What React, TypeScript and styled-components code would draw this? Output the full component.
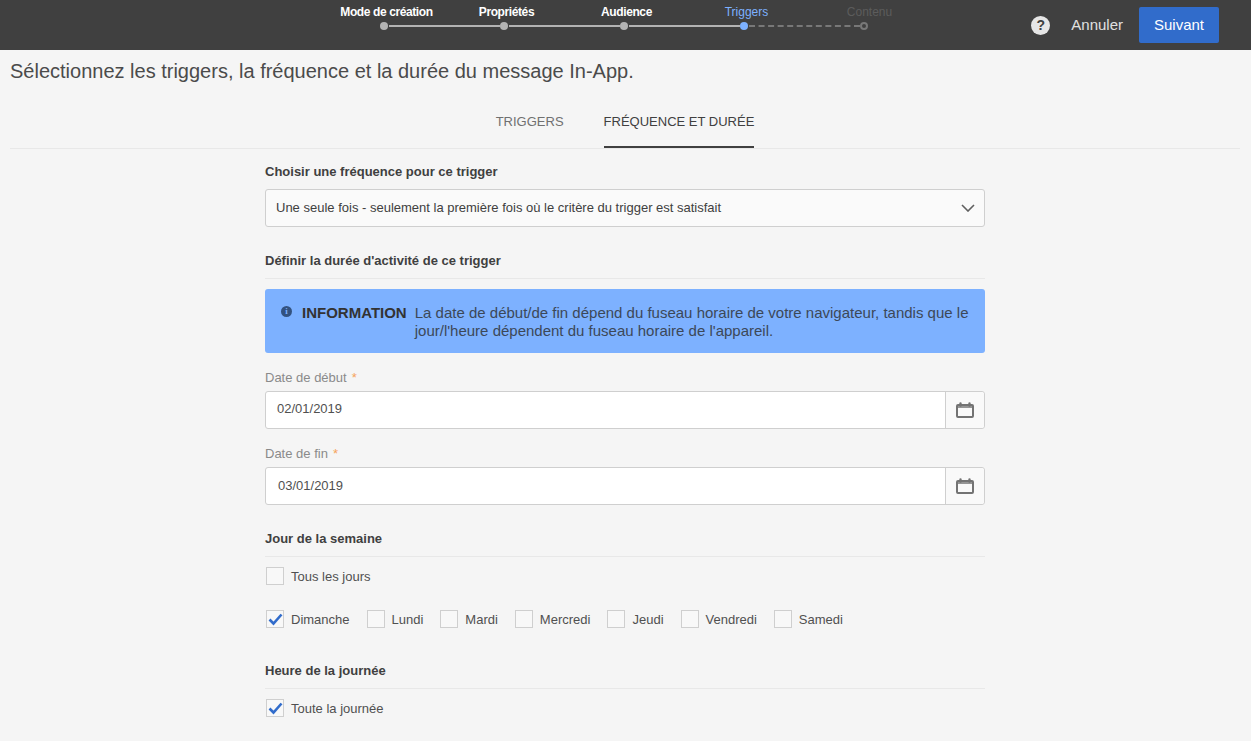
import styled, { createGlobalStyle } from 'styled-components';

const GlobalStyle = createGlobalStyle`
  html, body { margin: 0; padding: 0; background: #f5f5f5; }
  body {
    font-family: "Liberation Sans", Arial, sans-serif;
    color: #404040;
    height: 741px;
    overflow: hidden;
  }
  * { box-sizing: border-box; }
`;

const TopBar = styled.header`
  height: 50px;
  background: #404040;
  position: relative;
  display: flex;
  justify-content: flex-end;
  align-items: center;
  padding: 0 32px 0 0;
`;

const Stepper = styled.ol`
  position: absolute;
  left: 324px;
  top: 0;
  margin: 0;
  padding: 0;
  list-style: none;
  display: flex;
`;

const Step = styled.li<{ $state: 'done' | 'active' | 'todo' }>`
  width: 120px;
  height: 50px;
  position: relative;
  text-align: center;
  padding: 5px 0 0 ${p => (p.$state === 'todo' ? 11 : 5)}px;
  font-size: 12px;
  line-height: 14px;
  white-space: nowrap;
  font-weight: ${p => (p.$state === 'done' ? 'bold' : 'normal')};
  letter-spacing: ${p => (p.$state === 'done' ? '-0.4px' : '0')};
  color: ${p => (p.$state === 'done' ? '#fff' : p.$state === 'active' ? '#7db1ff' : '#5c5c5c')};
`;

const Dot = styled.span<{ $state: 'done' | 'active' | 'todo' }>`
  position: absolute;
  left: 56px;
  top: 22px;
  width: 8px;
  height: 8px;
  border-radius: 50%;
  background: ${p => (p.$state === 'done' ? '#b3b3b3' : p.$state === 'active' ? '#7db1ff' : 'transparent')};
  border: ${p => (p.$state === 'todo' ? '2px solid #787878' : 'none')};
`;

const Link = styled.span<{ $dashed?: boolean }>`
  position: absolute;
  left: 65px;
  top: 25px;
  width: 111px;
  border-top: 2px ${p => (p.$dashed ? 'dashed #787878' : 'solid #b3b3b3')};
`;

const HelpIcon = styled.span`
  width: 19px;
  height: 19px;
  border-radius: 50%;
  background: #e6e6e6;
  color: #404040;
  font-size: 14px;
  font-weight: bold;
  line-height: 19px;
  text-align: center;
  margin-right: 21px;
`;

const CancelLink = styled.span`
  font-size: 15px;
  line-height: 18px;
  color: #e0e0e0;
  margin-right: 16px;
`;

const NextButton = styled.button`
  width: 80px;
  height: 36px;
  border: 0;
  border-radius: 2px;
  background: #316ccb;
  color: #fff;
  font: 15px/18px "Liberation Sans", Arial, sans-serif;
  padding: 0;
`;

const PageTitle = styled.h1`
  margin: 0;
  padding: 9px 0 0 10px;
  height: 44px;
  font-size: 20px;
  line-height: 24px;
  font-weight: normal;
  color: #4b4b4b;
`;

const Tabs = styled.nav`
  margin: 0 11px 0 10px;
  height: 55px;
  border-bottom: 1px solid #e8e8e8;
  display: flex;
  justify-content: center;
  gap: 40px;
`;

const Tab = styled.div<{ $active?: boolean }>`
  height: 54px;
  padding-top: 20px;
  font-size: 13px;
  line-height: 16px;
  color: ${p => (p.$active ? '#404040' : '#707070')};
  border-bottom: ${p => (p.$active ? '2px solid #404040' : 'none')};
`;

const Form = styled.main`
  width: 720px;
  margin-left: 265px;
`;

const SectionLabel = styled.div`
  font-size: 13px;
  line-height: 16px;
  font-weight: bold;
  color: #404040;
`;

const FrequencyLabel = styled(SectionLabel)`
  padding-top: 15px;
  height: 40px;
`;

const SectionHead = styled(SectionLabel)<{ $top: number }>`
  margin-top: ${p => p.$top}px;
  padding-top: 1px;
  height: 27px;
  border-bottom: 1px solid #e8e8e8;
`;

const Select = styled.div`
  height: 38px;
  border: 1px solid #cfcfcf;
  border-radius: 3px;
  background: #fafafa;
  display: flex;
  align-items: center;
  justify-content: space-between;
  padding: 0 9px 0 10px;
  font-size: 13px;
  color: #404040;
`;

const SelectText = styled.span`
  line-height: 16px;
  padding-bottom: 1px;
`;

const InfoBox = styled.section`
  margin-top: 10px;
  height: 64px;
  background: #7db1ff;
  border-radius: 3px;
  padding: 15px 15px 0 16px;
  display: flex;
  font-size: 15px;
  line-height: 18px;
  color: #3c4858;
`;

const InfoGlyph = styled.span`
  width: 11px;
  height: 11px;
  margin-top: 2px;
  margin-right: 10px;
  flex: none;
  border-radius: 50%;
  background: #33527f;
  color: #7db1ff;
  font: bold 9px/11px "Liberation Serif", serif;
  text-align: center;
`;

const InfoTitle = styled.strong`
  margin-right: 8px;
  flex: none;
  color: #333;
`;

const FieldLabel = styled.label<{ $top: number }>`
  display: block;
  margin-top: ${p => p.$top}px;
  height: 22px;
  padding-top: 1px;
  font-size: 13px;
  line-height: 16px;
  color: #8a8a8a;
`;

const Required = styled.span`
  color: #f5a35c;
  margin-left: 5px;
`;

const DateField = styled.div`
  height: 38px;
  border: 1px solid #cfcfcf;
  border-radius: 3px;
  background: #fff;
  display: flex;
`;

const DateValue = styled.div<{ $indent: number; $line: number }>`
  flex: 1;
  padding-left: ${p => p.$indent}px;
  font-size: 13px;
  line-height: ${p => p.$line}px;
  color: #505050;
`;

const CalendarButton = styled.div`
  width: 39px;
  border-left: 1px solid #cfcfcf;
  background: #f9f9f9;
  border-radius: 0 3px 3px 0;
  display: flex;
  align-items: center;
  justify-content: center;
`;

const CheckRow = styled.div<{ $top: number }>`
  display: flex;
  margin-top: ${p => p.$top}px;
  gap: 17px;
  padding-left: 1px;
`;

const CheckItem = styled.div`
  display: flex;
  align-items: center;
  height: 18px;
  font-size: 13px;
  color: #505050;
`;

const CheckSquare = styled.span`
  width: 18px;
  height: 18px;
  border: 1px solid #cfcfcf;
  background: #f8f8f8;
  margin-right: 7px;
  display: flex;
  align-items: center;
  justify-content: center;
  flex: none;
`;

const steps = [
  { label: 'Mode de création', state: 'done' },
  { label: 'Propriétés', state: 'done' },
  { label: 'Audience', state: 'done' },
  { label: 'Triggers', state: 'active' },
  { label: 'Contenu', state: 'todo' },
] as const;

const days = [
  { label: 'Dimanche', checked: true },
  { label: 'Lundi' },
  { label: 'Mardi' },
  { label: 'Mercredi' },
  { label: 'Jeudi' },
  { label: 'Vendredi' },
  { label: 'Samedi' },
];

const CalendarIcon = () => (
  <svg width="18" height="16" viewBox="0 0 18 16">
    <rect x="1" y="3" width="16" height="12" rx="1" fill="none" stroke="#737373" strokeWidth="2" />
    <path d="M1 5h16" stroke="#737373" strokeWidth="1.5" />
    <path d="M4.5 1.5v2M13.5 1.5v2" stroke="#737373" strokeWidth="2.4" strokeLinecap="round" />
  </svg>
);

const Check = ({ label, checked }: { label: string; checked?: boolean }) => (
  <CheckItem>
    <CheckSquare>
      {checked && (
        <svg width="15" height="13" viewBox="0 0 15 13">
          <path d="M1.5 6.5 5.5 10.5 13.5 1.5" fill="none" stroke="#316ccb" strokeWidth="2.6" />
        </svg>
      )}
    </CheckSquare>
    {label}
  </CheckItem>
);

export default function App() {
  return (
    <>
      <GlobalStyle />
      <TopBar>
        <Stepper>
          {steps.map((s, i) => (
            <Step key={s.label} $state={s.state}>
              {s.label}
              <Dot $state={s.state} />
              {i < steps.length - 1 && <Link $dashed={s.state === 'active'} />}
            </Step>
          ))}
        </Stepper>
        <HelpIcon>?</HelpIcon>
        <CancelLink>Annuler</CancelLink>
        <NextButton>Suivant</NextButton>
      </TopBar>
      <PageTitle>Sélectionnez les triggers, la fréquence et la durée du message In-App.</PageTitle>
      <Tabs>
        <Tab>TRIGGERS</Tab>
        <Tab $active>FRÉQUENCE ET DURÉE</Tab>
      </Tabs>
      <Form>
        <FrequencyLabel>Choisir une fréquence pour ce trigger</FrequencyLabel>
        <Select>
          <SelectText>Une seule fois - seulement la première fois où le critère du trigger est satisfait</SelectText>
          <svg width="14" height="8" viewBox="0 0 14 8">
            <path d="M1 1l6 6 6-6" fill="none" stroke="#5f5f5f" strokeWidth="1.6" />
          </svg>
        </Select>
        <SectionHead $top={25}>Définir la durée d'activité de ce trigger</SectionHead>
        <InfoBox>
          <InfoGlyph>i</InfoGlyph>
          <InfoTitle>INFORMATION</InfoTitle>
          <span>
            La date de début/de fin dépend du fuseau horaire de votre navigateur, tandis que le
            jour/l'heure dépendent du fuseau horaire de l'appareil.
          </span>
        </InfoBox>
        <FieldLabel $top={16}>
          Date de début<Required>*</Required>
        </FieldLabel>
        <DateField>
          <DateValue $indent={11} $line={34}>02/01/2019</DateValue>
          <CalendarButton>
            <CalendarIcon />
          </CalendarButton>
        </DateField>
        <FieldLabel $top={16}>
          Date de fin<Required>*</Required>
        </FieldLabel>
        <DateField>
          <DateValue $indent={12} $line={36}>03/01/2019</DateValue>
          <CalendarButton>
            <CalendarIcon />
          </CalendarButton>
        </DateField>
        <SectionHead $top={25}>Jour de la semaine</SectionHead>
        <CheckRow $top={10}>
          <Check label="Tous les jours" />
        </CheckRow>
        <CheckRow $top={25}>
          {days.map(d => (
            <Check key={d.label} label={d.label} checked={d.checked} />
          ))}
        </CheckRow>
        <SectionHead $top={34}>Heure de la journée</SectionHead>
        <CheckRow $top={10}>
          <Check label="Toute la journée" checked />
        </CheckRow>
      </Form>
    </>
  );
}
